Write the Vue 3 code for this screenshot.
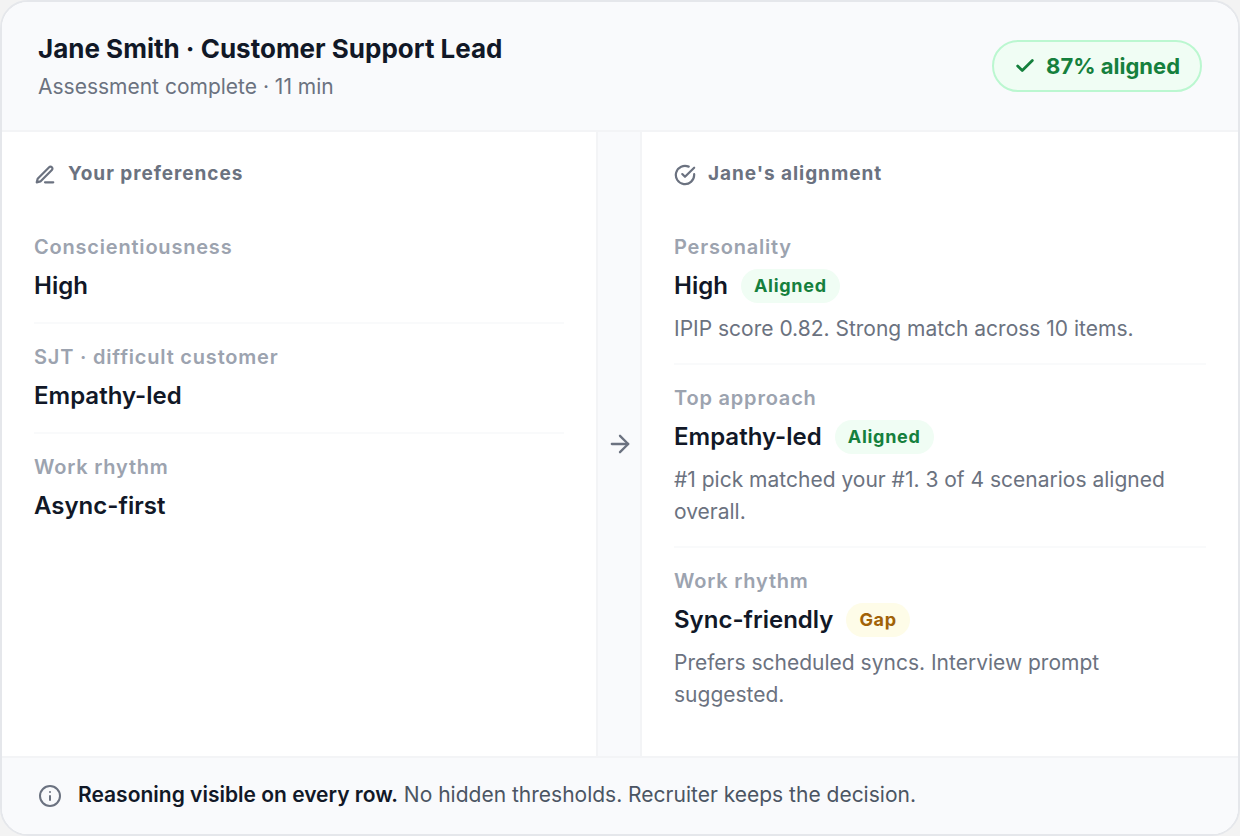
<script setup>
const preferences = [
  { label: 'Conscientiousness', value: 'High' },
  { label: 'SJT · difficult customer', value: 'Empathy-led' },
  { label: 'Work rhythm', value: 'Async-first' },
]

const alignment = [
  { label: 'Personality', value: 'High', status: 'Aligned', tone: 'good', note: 'IPIP score 0.82. Strong match across 10 items.' },
  { label: 'Top approach', value: 'Empathy-led', status: 'Aligned', tone: 'good', note: '#1 pick matched your #1. 3 of 4 scenarios aligned overall.' },
  { label: 'Work rhythm', value: 'Sync-friendly', status: 'Gap', tone: 'gap', note: 'Prefers scheduled syncs. Interview prompt suggested.' },
]
</script>

<template>
  <article class="card">
    <header class="head">
      <div>
        <h1 class="title">Jane Smith · Customer Support Lead</h1>
        <p class="subtitle">Assessment complete · 11 min</p>
      </div>
      <div class="score">
        <svg class="icon icon-bold" width="22" height="22" viewBox="0 0 24 24" aria-hidden="true">
          <path d="M20 6 9 17l-5-5" />
        </svg>
        <span>87% aligned</span>
      </div>
    </header>

    <div class="compare">
      <section class="column column-left">
        <h2 class="column-title">
          <svg class="icon" width="22" height="22" viewBox="0 0 24 24" aria-hidden="true">
            <path d="M12 20h9" />
            <path d="M16.5 3.5a2.121 2.121 0 0 1 3 3L7 19l-4 1 1-4Z" />
          </svg>
          <span>Your preferences</span>
        </h2>
        <dl class="rows">
          <div v-for="row in preferences" :key="row.label" class="row">
            <dt class="label">{{ row.label }}</dt>
            <dd class="value">{{ row.value }}</dd>
          </div>
        </dl>
      </section>

      <div class="divider">
        <svg class="icon" width="28" height="28" viewBox="0 0 24 24" aria-hidden="true">
          <path d="M5 12h14" />
          <path d="m12 5 7 7-7 7" />
        </svg>
      </div>

      <section class="column">
        <h2 class="column-title">
          <svg class="icon" width="22" height="22" viewBox="0 0 24 24" aria-hidden="true">
            <path d="M22 11.08V12a10 10 0 1 1-5.93-9.14" />
            <path d="m9 11 3 3L22 4" />
          </svg>
          <span>Jane's alignment</span>
        </h2>
        <dl class="rows">
          <div v-for="row in alignment" :key="row.label" class="row">
            <dt class="label">{{ row.label }}</dt>
            <dd class="value">
              <span>{{ row.value }}</span>
              <span class="tag" :class="row.tone">{{ row.status }}</span>
            </dd>
            <dd class="note">{{ row.note }}</dd>
          </div>
        </dl>
      </section>
    </div>

    <footer class="foot">
      <svg class="icon" width="24" height="24" viewBox="0 0 24 24" aria-hidden="true">
        <circle cx="12" cy="12" r="10" />
        <path d="M12 16v-4" />
        <path d="M12 8h.01" />
      </svg>
      <p class="foot-text"><strong>Reasoning visible on every row.</strong> No hidden thresholds. Recruiter keeps the decision.</p>
    </footer>
  </article>
</template>

<style>
body {
  background: #f3f3f3;
}
</style>

<style scoped>
.card {
  box-sizing: border-box;
  min-height: 100vh;
  display: flex;
  flex-direction: column;
  overflow: hidden;
  border: 2px solid #e5e7eb;
  border-radius: 28px;
  background: #ffffff;
  color: #111827;
  font-family: Inter, "Liberation Sans", sans-serif;
}

h1,
h2,
p,
dl,
dd {
  margin: 0;
}

.icon {
  flex: none;
  fill: none;
  stroke: currentColor;
  stroke-width: 2;
  stroke-linecap: round;
  stroke-linejoin: round;
}

.icon-bold {
  stroke-width: 3;
}

.head {
  display: flex;
  align-items: center;
  justify-content: space-between;
  gap: 24px;
  padding: 28px 36px;
  border-bottom: 2px solid #f3f4f6;
  background: #f9fafc;
}

.title {
  font-size: 26px;
  line-height: 38px;
  font-weight: 700;
}

.subtitle {
  margin-top: 4px;
  font-size: 21px;
  line-height: 30px;
  color: #6b7280;
}

.score {
  box-sizing: border-box;
  display: flex;
  align-items: center;
  gap: 10px;
  height: 52px;
  padding: 0 20px;
  border: 2px solid #bbf7d0;
  border-radius: 26px;
  background: #f0fdf4;
  color: #15803d;
  font-size: 22px;
  font-weight: 700;
  white-space: nowrap;
}

.compare {
  flex: 1;
  display: grid;
  grid-template-columns: 1fr 44px 1fr;
}

.column {
  padding: 28px 32px 26px;
}

.column-left {
  border-right: 2px solid #f3f4f6;
}

.divider {
  display: flex;
  align-items: center;
  justify-content: center;
  padding-left: 2px;
  border-right: 2px solid #f3f4f6;
  background: #f9fafc;
  color: #6b7280;
}

.column-title {
  display: flex;
  align-items: center;
  gap: 12px;
  margin-bottom: 26px;
  font-size: 19px;
  line-height: 28px;
  font-weight: 700;
  letter-spacing: 0.05em;
  color: #6b7280;
}

.column-title .icon {
  margin-top: 2px;
  stroke-width: 2.4;
}

.row {
  padding: 18px 0 17px;
  border-bottom: 2px solid #f9fafb;
}

.column-left .row {
  padding-bottom: 18px;
}

.row:last-child {
  border-bottom: 0;
}

.label {
  font-size: 20px;
  line-height: 30px;
  font-weight: 600;
  letter-spacing: 0.04em;
  color: #9ca3af;
}

.value {
  display: flex;
  align-items: center;
  gap: 13px;
  margin-top: 6px;
  font-size: 24px;
  line-height: 36px;
  font-weight: 600;
}

.tag {
  padding: 0 13px;
  border-radius: 17px;
  font-size: 18px;
  line-height: 34px;
  font-weight: 700;
  letter-spacing: 0.04em;
}

.good {
  background: #f0fdf4;
  color: #15803d;
}

.gap {
  background: #fefce8;
  color: #a16207;
}

.note {
  margin-top: 9px;
  font-size: 21px;
  line-height: 1.55;
  color: #6b7280;
}

.foot {
  display: flex;
  align-items: center;
  gap: 16px;
  padding: 22px 36px;
  border-top: 2px solid #f3f4f6;
  background: #f9fafc;
  color: #6b7280;
}

.foot-text {
  padding-bottom: 2px;
  font-size: 21px;
  line-height: 30px;
  color: #4b5563;
}

.foot-text strong {
  font-weight: 600;
  color: #111827;
}
</style>
